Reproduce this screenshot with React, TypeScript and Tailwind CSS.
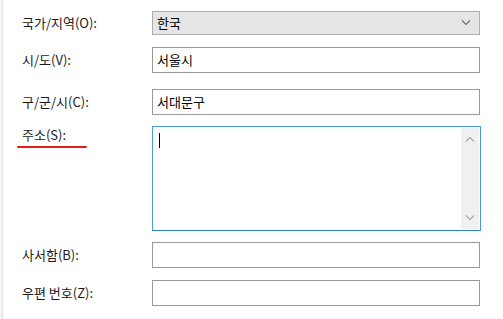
const labelCls = "w-[149px] shrink-0 pl-[19px] text-[13px] text-[#1a1a1a]";
const boxCls = "flex h-[26px] w-[328px] items-center border border-[#999999] bg-white px-[4px] text-[13px] text-black";

function Chevron({ up, className }: { up?: boolean; className?: string }) {
  return (
    <svg width="10" height="6" viewBox="0 0 10 6" className={className}>
      <path
        d={up ? "M1 5.5 L5 1.5 L9 5.5" : "M1 0.5 L5 4.5 L9 0.5"}
        fill="none"
        stroke="currentColor"
        strokeWidth="1.1"
      />
    </svg>
  );
}

export default function App() {
  return (
    <div
      className="flex h-[319px] w-[503px] bg-white"
      style={{ fontFamily: '"Noto Sans CJK KR", "Noto Sans", sans-serif' }}
    >
      <div className="w-[3px] shrink-0 border-r border-[#e3e3e3] bg-[#f3f3f3]" />
      <div className="flex flex-1 flex-col pt-[11px]">
        <div className="flex items-center">
          <span className={labelCls}>국가/지역(O):</span>
          <div className="flex h-[24px] w-[328px] items-center justify-between border border-[#adadad] bg-[#e5e5e5] pl-[4px] pr-[8px] text-[13px] text-black">
            <span>한국</span>
            <Chevron className="text-[#6a6a6a]" />
          </div>
        </div>
        <div className="mt-[12px] flex items-center">
          <span className={labelCls}>시/도(V):</span>
          <div className={boxCls}>서울시</div>
        </div>
        <div className="mt-[16px] flex items-center">
          <span className={labelCls}>구/군/시(C):</span>
          <div className={boxCls}>서대문구</div>
        </div>
        <div className="mt-[11px] flex items-start">
          <div className="w-[149px] shrink-0 pl-[14px]">
            <span className="block pl-[5px] text-[13px] leading-[18px] text-[#1a1a1a]">주소(S):</span>
            <div className="mt-[2px] h-[2px] w-[70px] rounded-full bg-[#e0201c]" />
          </div>
          <div className="flex h-[105px] w-[329px] border border-[#4a9ae4] border-b-[#2f7fd0] bg-white">
            <div className="flex-1 pl-[6px] pt-[6px]">
              <div className="h-[15px] w-[1px] bg-black" />
            </div>
            <div className="my-[1px] mr-[1px] flex w-[18px] flex-col items-center justify-between bg-[#f0f0f0] py-[8px] text-[#a6a6a6]">
              <Chevron up />
              <Chevron />
            </div>
          </div>
        </div>
        <div className="mt-[11px] flex items-center">
          <span className={labelCls}>사서함(B):</span>
          <div className={boxCls} />
        </div>
        <div className="mt-[12px] flex items-center">
          <span className={labelCls}>우편 번호(Z):</span>
          <div className={boxCls} />
        </div>
      </div>
    </div>
  );
}
